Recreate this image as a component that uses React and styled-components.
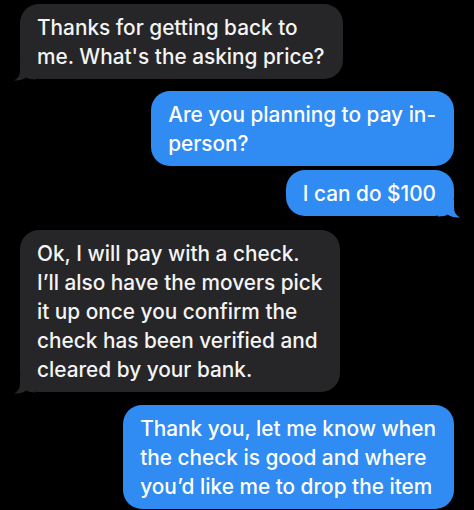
import React from "react";
import styled, { createGlobalStyle } from "styled-components";

const GlobalStyle = createGlobalStyle`
  html, body {
    margin: 0;
    padding: 0;
    background: #000;
    overflow: hidden;
  }
  body {
    font-family: Inter, "Noto Sans", "Liberation Sans", sans-serif;
    -webkit-font-smoothing: antialiased;
  }
`;

const messages = [
  { from: "them", lines: ["Thanks for getting back to", "me. What's the asking price?"], tail: true },
  { from: "me", lines: ["Are you planning to pay in-", "person?"], gap: 12 },
  { from: "me", lines: ["I can do $100"], tail: true, gap: 4 },
  {
    from: "them",
    lines: [
      "Ok, I will pay with a check.",
      "I\u2019ll also have the movers pick",
      "it up once you confirm the",
      "check has been verified and",
      "cleared by your bank.",
    ],
    tail: true,
    gap: 14,
  },
  {
    from: "me",
    lines: [
      "Thank you, let me know when",
      "the check is good and where",
      "you\u2019d like me to drop the item",
    ],
    gap: 13,
  },
];

const Thread = () => {
  return (
    <StyledThread>
      {messages.map((m, i) => (
        <Row key={i} $mine={m.from === "me"} $gap={m.gap || 0}>
          <Bubble $mine={m.from === "me"}>
            {m.lines.map((l, j) => (
              <Line key={j}>{l}</Line>
            ))}
            {m.tail && <Tail mine={m.from === "me"} />}
          </Bubble>
        </Row>
      ))}
    </StyledThread>
  );
};

const Tail = ({ mine }) => (
  <TailSvg $mine={mine} width="22" height="18" viewBox="0 0 22 18">
    <path d="M6 0 L6 8 C6 12 4 15.5 0 17.5 C5 18 9 16.8 12.5 14.6 C14.5 16 17.5 16.5 22 16.5 L22 0 Z" />
  </TailSvg>
);

const StyledThread = styled.div`
  display: flex;
  flex-direction: column;
  padding: 4px 20px 0;
`;

const Row = styled.div`
  display: flex;
  justify-content: ${(p) => (p.$mine ? "flex-end" : "flex-start")};
  margin-top: ${(p) => p.$gap}px;
`;

const Bubble = styled.div`
  position: relative;
  padding: 9px 18px 8px 17px;
  border-radius: 19px;
  background: ${(p) => (p.$mine ? "#308cf2" : "#262628")};
  color: ${(p) => (p.$mine ? "#fff" : "#f4f4f4")};
  font-size: 20.8px;
  font-weight: 500;
  line-height: 29px;
  letter-spacing: 0;

  svg {
    fill: ${(p) => (p.$mine ? "#308cf2" : "#262628")};
  }
`;

const Line = styled.span`
  display: block;
  white-space: nowrap;
`;

const TailSvg = styled.svg`
  position: absolute;
  bottom: -1.5px;
  ${(p) => (p.$mine ? "right: -6px; transform: scaleX(-1);" : "left: -6px;")}
`;

export default function App() {
  return (
    <>
      <GlobalStyle />
      <Thread />
    </>
  );
}
